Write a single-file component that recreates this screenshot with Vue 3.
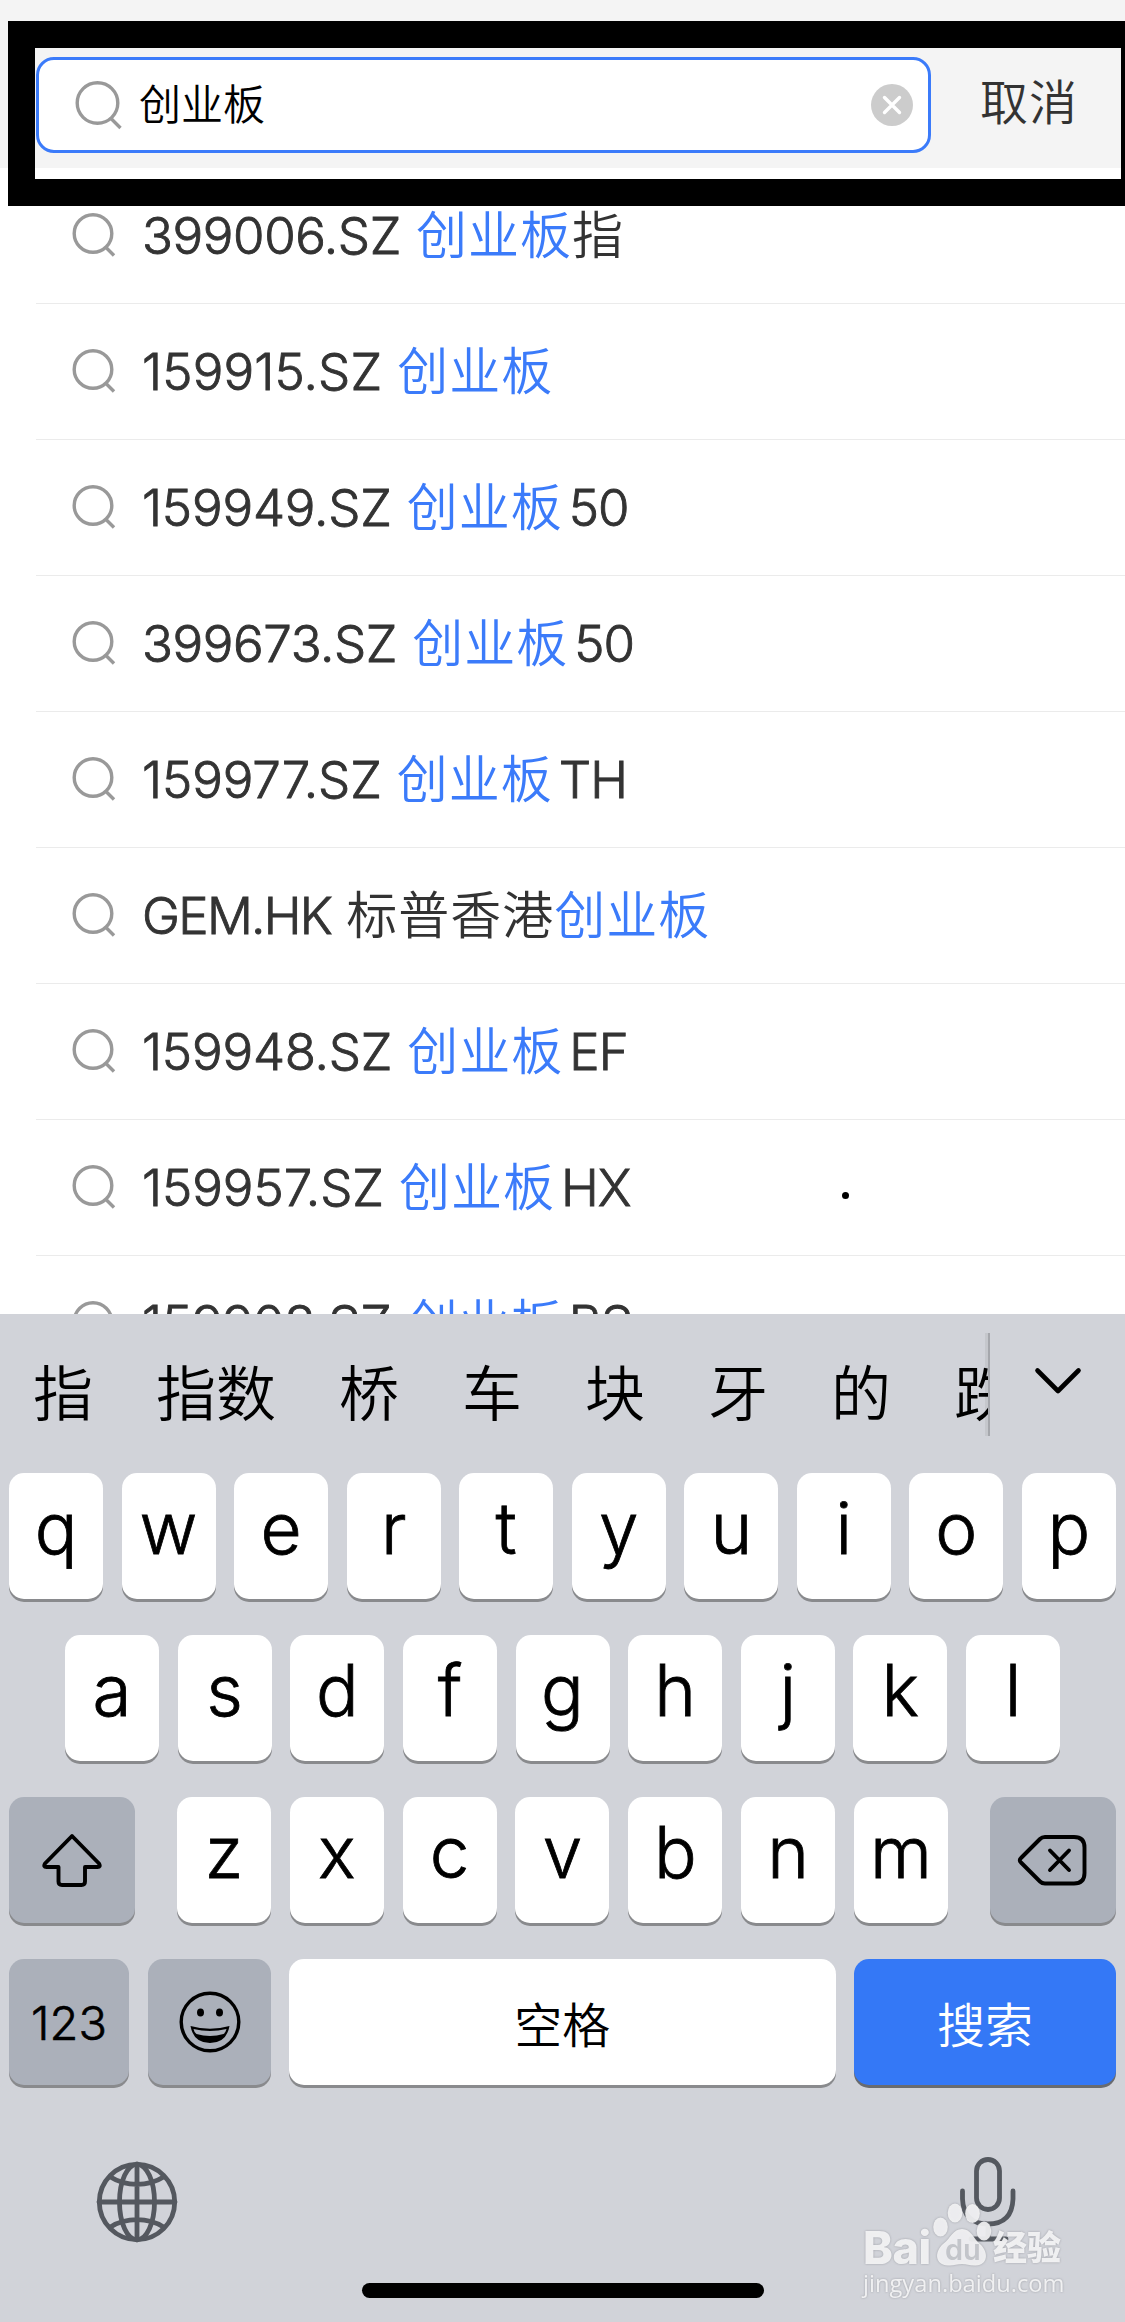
<script setup>
const results = [
  { code: '399006.SZ', tracking: -0.4, before: '', hit: '创业板', after: '指' },
  { code: '159915.SZ', tracking: 0.15, before: '', hit: '创业板', after: '' },
  { code: '159949.SZ', tracking: -0.2, before: '', hit: '创业板', after: '50' },
  { code: '399673.SZ', tracking: -0.4, before: '', hit: '创业板', after: '50' },
  { code: '159977.SZ', tracking: -0.1, before: '', hit: '创业板', after: 'TH' },
  { code: 'GEM.HK', tracking: -1.7, before: '标普香港', hit: '创业板', after: '' },
  { code: '159948.SZ', tracking: -0.2, before: '', hit: '创业板', after: 'EF' },
  { code: '159957.SZ', tracking: -0.05, before: '', hit: '创业板', after: 'HX' },
  { code: '159908.SZ', tracking: -0.2, before: '', hit: '创业板', after: 'BS' },
]
const isLatin = (s) => /^[A-Z0-9]/.test(s)
const candidates = ['指', '指数', '桥', '车', '块', '牙', '的', '跌']
const row1 = 'qwertyuiop'.split('')
const row2 = 'asdfghjkl'.split('')
const row3 = 'zxcvbnm'.split('')
</script>

<template>
  <div class="screen">
    <header class="search-bar">
      <div class="field">
        <svg class="mag-lg" viewBox="0 0 50 52" width="50" height="52">
          <circle cx="23.5" cy="24" r="20.3" />
          <path d="M37 39.5 L46.5 49" />
        </svg>
        <span class="query">创业板</span>
        <svg class="clear" viewBox="0 0 42 42" width="42" height="42">
          <circle cx="21" cy="21" r="21" />
          <path d="M13.5 13.5 L28.5 28.5 M28.5 13.5 L13.5 28.5" />
        </svg>
      </div>
      <span class="cancel">取消</span>
    </header>

    <main class="results">
      <div v-for="r in results" :key="r.code" class="row">
        <svg class="mag" viewBox="0 0 46 46" width="46" height="46">
          <circle cx="21" cy="21.5" r="18.8" />
          <path d="M34 35.5 L42 43.5" />
        </svg>
        <span class="label"><span class="code" :style="{ letterSpacing: r.tracking + 'px' }">{{ r.code }}</span><span>{{ r.before }}</span><span class="hit">{{ r.hit }}</span><span :class="{ latin: isLatin(r.after) }">{{ r.after }}</span></span>
      </div>
    </main>

    <section class="keyboard">
      <div class="cands">
        <div class="cand-list">
          <span v-for="c in candidates" :key="c">{{ c }}</span>
        </div>
        <svg class="chev" viewBox="0 0 48 28" width="48" height="28">
          <path d="M3.5 3.5 L24 24 L44.5 3.5" />
        </svg>
      </div>

      <div class="krow">
        <div v-for="k in row1" :key="k" class="key letter">{{ k }}</div>
      </div>
      <div class="krow mid">
        <div v-for="k in row2" :key="k" class="key letter">{{ k }}</div>
      </div>
      <div class="krow">
        <div class="key fn shift">
          <svg viewBox="0 0 60 54" width="60" height="54">
            <path d="M30 3 L57 30.5 Q59 34 55.5 34 H43 V48.5 Q43 52 39.5 52 H20 Q16.5 52 16.5 48.5 V34 H4.5 Q1 34 3 30.5 Z" />
          </svg>
        </div>
        <div class="letters">
          <div v-for="k in row3" :key="k" class="key letter">{{ k }}</div>
        </div>
        <div class="key fn del">
          <svg viewBox="0 0 70 54" width="70" height="54">
            <path d="M28 4 H57 Q67.500 4 67.500 14.500 V40 Q67.500 50.500 57 50.500 H28 Q25 50.500 23 48.500 L4 29.500 Q1.500 27.200 4 25 L23 6 Q25 4 28 4 Z" />
            <path d="M33 17.500 L52 37 M52 17.500 L33 37" />
          </svg>
        </div>
      </div>
      <div class="krow bottom">
        <div class="key fn num">123</div>
        <div class="key fn emoji">
          <svg viewBox="0 0 62 62" width="62" height="62">
            <circle cx="31" cy="31" r="28.800" fill="none" stroke="#000" stroke-width="3.400" />
            <ellipse cx="21.500" cy="21.500" rx="3.500" ry="4" />
            <ellipse cx="40.500" cy="21.500" rx="3.500" ry="4" />
            <path d="M11.500 35 Q31 40.500 50.500 35 Q47.500 52 31 52 Q14.500 52 11.500 35 Z" />
            <path d="M14.500 38 Q31 42 47.500 38 Q46.500 42 44.500 43 Q31 47 17.500 43 Q15 41 14.500 38 Z" fill="#abb0ba" />
          </svg>
        </div>
        <div class="key space">空格</div>
        <div class="key go">搜索</div>
      </div>

      <div class="system">
        <svg class="globe" viewBox="0 0 82 82" width="82" height="82">
          <circle cx="41" cy="41" r="37.700" />
          <ellipse cx="41" cy="41" rx="17.500" ry="37.700" />
          <path d="M41 3 V79 M3 41 H79 M14.500 16 Q26 23.300 41 23.300 T67.500 16 M14.500 66 Q26 58.700 41 58.700 T67.500 66" />
        </svg>
        <svg class="mic" viewBox="0 0 60 88" width="60" height="88">
          <rect x="16.500" y="4.500" width="23" height="50" rx="11.500" />
          <path d="M2.500 36 V44 Q3.500 69 28 69 Q52 69 53 44 V36 M28 69 V84 M11 84 H46" />
        </svg>
      </div>
      <div class="home"></div>
    </section>

    <div class="frame"></div>
    <div class="dot"></div>

    <div class="watermark">
      <div class="brand">
        <span class="bai">Bai</span>
        <div class="paw">
          <svg viewBox="0 0 62 66" width="62" height="66">
            <ellipse cx="9.500" cy="26" rx="7.300" ry="9.600" />
            <ellipse cx="24" cy="12" rx="7.300" ry="9.600" />
            <ellipse cx="41.500" cy="12.500" rx="7.300" ry="9.600" />
            <ellipse cx="53" cy="30" rx="7.300" ry="9.600" />
            <path d="M31 28 C40 28 42 37 49 43 C58 51 57 64 45 64.500 C39 65 36 63 31 63 C26 63 22 65 17 64.500 C4 64 3 51 12 43 C20 37 22 28 31 28 Z" />
          </svg>
          <span class="du">du</span>
        </div>
        <span class="jy">经验</span>
      </div>
      <div class="url">jingyan.baidu.com</div>
    </div>
  </div>
</template>

<style>
body {
  margin: 0;
}
</style>

<style scoped>
.screen {
  position: relative;
  width: 1125px;
  height: 2322px;
  overflow: hidden;
  background: #fff;
  font-family: Inter, "Noto Sans CJK SC", sans-serif;
  font-weight: 350;
  color: #333;
  display: flex;
  flex-direction: column;
}
.search-bar {
  box-sizing: border-box;
  height: 168px;
  flex: none;
  background: #f4f4f4;
  padding: 57px 0 15px 36px;
  display: flex;
}
.field {
  box-sizing: border-box;
  width: 895px;
  height: 96px;
  border: 3px solid #3b7bfa;
  border-radius: 18px;
  background: #fff;
  display: flex;
  align-items: center;
  padding: 0 15px 0 35px;
}
.mag-lg,
.mag {
  fill: none;
  stroke: #999;
  stroke-width: 3.4;
  flex: none;
}
.query {
  flex: 1;
  margin-left: 15px;
  font-size: 42px;
  line-height: 92px;
  color: #000;
}
.clear {
  fill: #ccc;
}
.clear path {
  stroke: #fff;
  stroke-width: 3.4;
  stroke-linecap: round;
}
.cancel {
  margin-left: 49px;
  font-size: 48px;
  line-height: 91px;
  letter-spacing: 1px;
}
.results {
  height: 1146px;
  flex: none;
  overflow: hidden;
}
.row {
  box-sizing: border-box;
  height: 136px;
  margin-left: 36px;
  padding-left: 36px;
  border-bottom: 1px solid #ebebeb;
  display: flex;
}
.mag {
  margin-top: 44px;
}
.label {
  margin-left: 24px;
  font-size: 51px;
  line-height: 136px;
  letter-spacing: 1px;
  white-space: nowrap;
}
.code {
  margin-right: 15px;
  -webkit-text-stroke: 0.9px currentColor;
}
.hit {
  color: #3b7bfa;
}
.latin {
  letter-spacing: -1px;
  margin-left: 6px;
  -webkit-text-stroke: 0.9px currentColor;
}
.keyboard {
  flex: 1;
  background: #d1d3d9;
  color: #000;
}
.cands {
  height: 159px;
  display: flex;
}
.cand-list {
  box-sizing: border-box;
  width: 990px;
  height: 103px;
  margin-top: 19px;
  padding-left: 33px;
  border-right: 2px solid #a5a7ac;
  box-shadow: inset -3px 0 0 #c5c7cc;
  overflow: hidden;
  display: flex;
  gap: 63px;
  font-size: 60px;
  line-height: 123px;
  white-space: nowrap;
}
.chev {
  margin: 53px 0 0 44px;
  fill: none;
  stroke: #000;
  stroke-width: 4.6;
  stroke-linecap: round;
  stroke-linejoin: round;
}
.krow {
  display: flex;
  justify-content: space-between;
  padding: 0 9px;
  margin-bottom: 36px;
}
.krow.mid {
  padding: 0 65px;
}
.letters {
  width: 771px;
  display: flex;
  justify-content: space-between;
}
.key {
  box-sizing: border-box;
  height: 126px;
  border-radius: 15px;
  background: #fff;
  box-shadow: 0 3px 0 #898a8d;
  text-align: center;
  flex: none;
}
.letter {
  width: 94px;
  font-size: 71px;
  line-height: 110px;
  -webkit-text-stroke: 0.8px currentColor;
}
.fn {
  background: #abb0ba;
  display: flex;
  align-items: center;
  justify-content: center;
}
.shift,
.del {
  width: 126px;
}
.shift svg,
.del svg {
  fill: none;
  stroke: #000;
  stroke-width: 3.9;
  stroke-linejoin: round;
  stroke-linecap: round;
}
.del svg {
  margin-left: -2px;
}
.num {
  width: 120px;
  font-size: 47px;
  -webkit-text-stroke: 0.6px currentColor;
}
.emoji {
  width: 123px;
  margin-left: 1px;
}
.space,
.go {
  font-size: 48px;
  line-height: 134px;
}
.space {
  width: 547px;
  margin-left: -1px;
}
.go {
  width: 262px;
  background: #3478f6;
  color: #fff;
  box-shadow: 0 3px 0 #696b6f;
}
.system {
  display: flex;
  justify-content: space-between;
  padding: 34px 105px 0 96px;
  height: 128px;
}
.system svg {
  fill: none;
  stroke: #54585f;
  stroke-width: 4.8;
  stroke-linecap: round;
}
.globe {
  margin-top: 6px;
}
.home {
  width: 402px;
  height: 15px;
  border-radius: 8px;
  background: #000;
  margin: 0 auto;
}
.frame {
  position: absolute;
  left: 8px;
  top: 21px;
  width: 1086px;
  height: 131px;
  border: 27px solid #000;
  border-right-width: 30px;
}
.dot {
  position: absolute;
  left: 842px;
  top: 1192px;
  width: 7px;
  height: 7px;
  border-radius: 50%;
  background: #000;
}
.watermark {
  position: absolute;
  left: 863px;
  top: 2201px;
  width: 204px;
  color: rgba(245, 245, 246, 0.92);
  filter: drop-shadow(0 0 1px rgba(120, 122, 128, 0.6));
}
.brand {
  display: flex;
  height: 66px;
}
.bai {
  width: 68px;
  margin-top: 26px;
  font-size: 45px;
  line-height: 42px;
  font-weight: 800;
  letter-spacing: -0.5px;
}
.paw {
  position: relative;
  width: 62px;
}
.paw svg {
  fill: rgba(245, 245, 246, 0.9);
}
.du {
  position: absolute;
  left: 14px;
  top: 34px;
  font-size: 29px;
  line-height: 29px;
  font-weight: 600;
  color: #c3c5ca;
}
.jy {
  margin-top: 28px;
  font-size: 34px;
  line-height: 38px;
  font-weight: 800;
}
.url {
  margin-top: 3px;
  font-family: "Open Sans", sans-serif;
  font-size: 23.7px;
  font-weight: 500;
  line-height: 26px;
  white-space: nowrap;
}
</style>
